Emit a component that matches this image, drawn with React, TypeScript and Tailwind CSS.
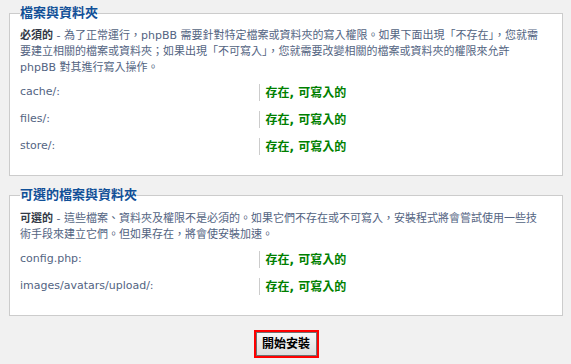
const font = "font-[family-name:'DejaVu_Sans','Noto_Sans_CJK_TC',sans-serif]";

interface Row {
  label: string;
}

function CheckRow({ label }: Row) {
  return (
    <div className="flex h-[27px] items-center">
      <div className="w-[45%] shrink-0 text-[11px] text-[#536482]">{label}</div>
      <div className="flex h-[17px] items-center border-l border-[#cccccc] pl-[5px] text-[12px] font-bold text-[#008000]">
        存在, 可寫入的
      </div>
    </div>
  );
}

function Section({
  title,
  first,
  children,
  rows,
}: {
  title: string;
  first?: boolean;
  children: React.ReactNode;
  rows: string[];
}) {
  return (
    <fieldset
      className={`border border-[#cccccc] bg-white px-[10px] pb-[15px] ${first ? "pt-[7px]" : "mt-[11px] pt-[8px]"}`}
    >
      <legend className="text-[13px] leading-[16px] font-bold text-[#115098]">{title}</legend>
      <p className="mb-[3px] text-[11px] leading-[16px] text-[#536482]">{children}</p>
      {rows.map((r) => (
        <CheckRow key={r} label={r} />
      ))}
    </fieldset>
  );
}

export default function App() {
  return (
    <div className={`h-[364px] w-[571px] bg-[#f1f1f1] pt-[5px] pl-[9px] pr-[8px] ${font}`}>
      <Section title="檔案與資料夾" first rows={["cache/:", "files/:", "store/:"]}>
        <strong className="text-[#333a47]">必須的</strong> - 為了正常運行，phpBB 需要針對特定檔案或資料夾的寫入權限。如果下面出現「不存在」，您就需
        <br />
        要建立相關的檔案或資料夾；如果出現「不可寫入」，您就需要改變相關的檔案或資料夾的權限來允許
        <br />
        phpBB 對其進行寫入操作。
      </Section>

      <Section title="可選的檔案與資料夾" rows={["config.php:", "images/avatars/upload/:"]}>
        <strong className="text-[#333a47]">可選的</strong> - 這些檔案、資料夾及權限不是必須的。如果它們不存在或不可寫入，安裝程式將會嘗試使用一些技
        <br />
        術手段來建立它們。但如果存在，將會使安裝加速。
      </Section>

      <div className="mt-[14px] flex justify-center">
        <span className="flex h-[28px] w-[65px] border-2 border-[#ff0000]">
          <button className="flex h-full w-full items-center justify-center border border-[#707070] bg-gradient-to-b from-[#f6f6f6] to-[#dedede] text-[12px] font-bold text-black">
            開始安裝
          </button>
        </span>
      </div>
    </div>
  );
}
